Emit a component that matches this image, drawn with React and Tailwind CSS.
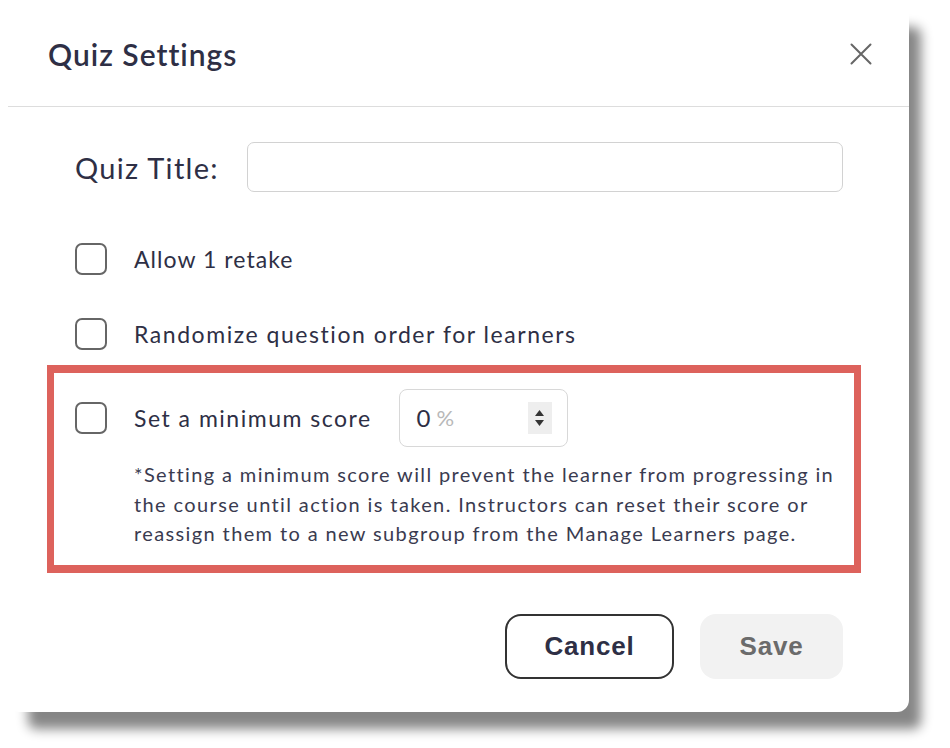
import React from "react";

function Checkbox() {
  return (
    <span className="block w-[32px] h-[32px] shrink-0 rounded-[7px] border-[2.5px] border-[#666666] bg-white" />
  );
}

export default function App() {
  return (
    <div className="w-[950px] min-h-[748px] bg-white pl-[8px] pt-[2px]" style={{ fontFamily: "Lato, 'Noto Sans', sans-serif" }}>
      <div className="w-[901px] h-[710px] bg-white rounded-[12px] shadow-[16px_21px_12px_-4px_rgba(0,0,0,0.48)] flex flex-col text-[#2e2f45]">
        <div className="h-[105px] shrink-0 flex items-center justify-between pl-[40px] pr-[37px] border-b border-[#dddddd]">
          <h2 className="text-[30px] font-semibold leading-none tracking-[1px]">Quiz Settings</h2>
          <svg width="22" height="22" viewBox="0 0 22 22" fill="none" stroke="#666666" strokeWidth="2" strokeLinecap="round">
            <path d="M1.5 1.5 L20.5 20.5 M20.5 1.5 L1.5 20.5" />
          </svg>
        </div>

        <div className="flex flex-col pl-[67px] pr-[66px] pt-[35px]">
          <div className="flex items-center h-[50px]">
            <label className="text-[29px] leading-none tracking-[1.3px] w-[172px] shrink-0">Quiz Title:</label>
            <div className="flex-1 h-[50px] rounded-[7px] border-[1.5px] border-[#d2d2d2]" />
          </div>

          <div className="flex items-center gap-[27px] mt-[51px] h-[32px]">
            <Checkbox />
            <span className="text-[23px] leading-none tracking-[1.05px]">Allow 1 retake</span>
          </div>

          <div className="flex items-center gap-[27px] mt-[43px] h-[32px]">
            <Checkbox />
            <span className="text-[23px] leading-none tracking-[1.55px]">Randomize question order for learners</span>
          </div>

          <div className="-ml-[28px] w-[814px] mt-[15px] border-x-[7px] border-y-[8px] border-[#dd625c] pl-[21px] pt-[16px] pb-[16px]">
            <div className="flex items-center h-[58px]">
              <Checkbox />
              <span className="text-[23px] leading-none tracking-[1.5px] ml-[27px]">Set a minimum score</span>
              <div className="ml-[27px] w-[169px] h-[58px] rounded-[8px] border-[1.5px] border-[#d8d8d8] flex items-center pl-[17px] pr-[15px]">
                <span className="text-[24px] leading-none">0</span>
                <span className="text-[22px] leading-none text-[#b8b8b8] ml-[6px]">%</span>
                <div className="ml-auto w-[24px] h-[32px] bg-[#eeeeee] flex flex-col items-center justify-center gap-[4px]">
                  <svg width="9" height="6" viewBox="0 0 9 6"><path d="M0 6 L4.5 0 L9 6 Z" fill="#333333" /></svg>
                  <svg width="9" height="6" viewBox="0 0 9 6"><path d="M0 0 L9 0 L4.5 6 Z" fill="#333333" /></svg>
                </div>
              </div>
            </div>
            <p className="mt-[13px] ml-[59px] text-[20px] leading-[29.5px] tracking-[1.38px] text-[#3a3b50] whitespace-nowrap">
              *Setting a minimum score will prevent the learner from progressing in
              <br />
              the course until action is taken. Instructors can reset their score or
              <br />
              reassign them to a new subgroup from the Manage Learners page.
            </p>
          </div>

          <div className="flex justify-end gap-[26px] mt-[41px]" style={{ fontFamily: "'Liberation Sans', Arial, sans-serif" }}>
            <button className="w-[169px] h-[65px] rounded-[16px] border-2 border-[#333333] bg-white text-[26px] font-bold tracking-[0.8px] text-[#2e2f45]">
              Cancel
            </button>
            <button className="w-[143px] h-[65px] rounded-[16px] bg-[#f2f2f2] text-[26px] font-bold tracking-[0.8px] text-[#6b6b6b]">
              Save
            </button>
          </div>
        </div>
      </div>
    </div>
  );
}
